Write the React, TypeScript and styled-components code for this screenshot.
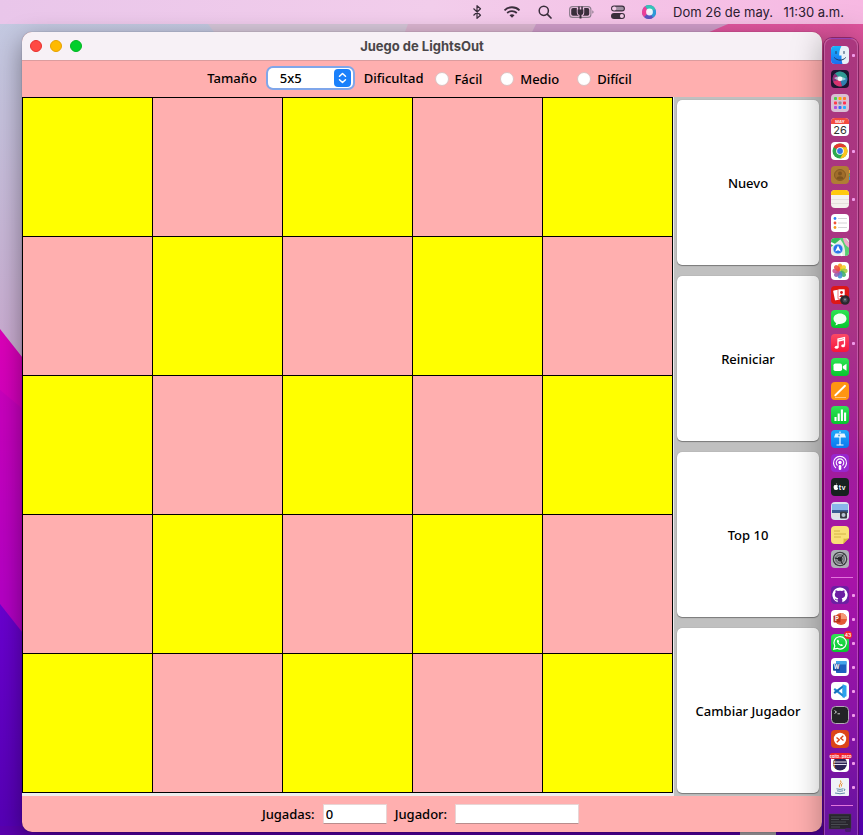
import React, { useState } from "react";
import styled, { createGlobalStyle } from "styled-components";

const GlobalStyle = createGlobalStyle`
  *, *::before, *::after { box-sizing: border-box; }
  html, body { margin: 0; padding: 0; overflow: hidden; }
  button, input, select { font: inherit; color: inherit; }
`;

const uiFont = `"Noto Sans", "Open Sans", sans-serif`;
const systemFont = `Inter, "Liberation Sans", sans-serif`;

const Screen = styled.div`
  position: relative;
  isolation: isolate;
  height: 100vh;
  overflow: hidden;
  display: grid;
  grid-template-rows: 24px minmax(0, 1fr);
  font-family: ${uiFont};
  font-size: 13px;
  font-weight: 500;
  color: #000;
`;

const WallpaperArt = styled.svg`
  position: absolute;
  inset: 0;
  width: 100%;
  height: 100%;
  z-index: -1;
`;

const MenuBar = styled.header`
  display: flex;
  align-items: center;
  justify-content: flex-end;
  gap: 17px;
  padding-right: 19px;
  background: linear-gradient(90deg, #e9c6ea, #f2cdeb 50%, #f7b8e2);
  font-family: ${systemFont};
  font-size: 13px;
  font-weight: 400;
  color: #2b2030;
`;

const MenuIcon = styled.svg`
  display: block;
  flex: none;
`;

const Clock = styled.time`
  display: flex;
  justify-content: space-between;
  min-width: 171px;
  white-space: nowrap;
`;

const Desktop = styled.div`
  display: grid;
  grid-template-columns: minmax(0, 1fr) 34px;
  grid-template-rows: minmax(0, 1fr);
  gap: 2px;
  padding: 0 5px 0 22px;
  min-height: 0;
`;

const Window = styled.main`
  display: flex;
  flex-direction: column;
  min-height: 0;
  margin: 8px 0 3px;
  border-radius: 10px;
  overflow: hidden;
  background: #ffafaf;
  box-shadow: 0 0 1px rgba(0, 0, 0, 0.6), 0 8px 26px rgba(0, 0, 0, 0.4);
`;

const TitleBar = styled.div`
  display: grid;
  grid-template-columns: 1fr auto 1fr;
  align-items: center;
  height: 29px;
  padding: 0 8px;
  background: #f7f1f6;
  border-bottom: 1px solid #dc9c9e;
`;

const Title = styled.h1`
  margin: 0;
  font-family: ${systemFont};
  font-size: 13px;
  font-weight: 700;
  color: #4a4649;
`;

const Lights = styled.div`
  display: flex;
  gap: 8px;
`;

const Light = styled.button<{ $fill: string; $edge: string }>`
  width: 12px;
  height: 12px;
  padding: 0;
  border: 1px solid ${(p) => p.$edge};
  border-radius: 50%;
  background: ${(p) => p.$fill};
`;

const Toolbar = styled.div`
  display: flex;
  align-items: center;
  justify-content: center;
  gap: 11px;
  height: 36px;
  padding: 0 5px 2px 0;
`;

const SelectBox = styled.div`
  position: relative;
  display: flex;
  align-items: center;
`;

const SizeSelect = styled.select`
  appearance: none;
  width: 85px;
  height: 20px;
  padding: 0 24px 0 12px;
  border: 0;
  border-radius: 5px;
  background: #fff;
  box-shadow: 0 0 0 2px #7fa6ea;
  line-height: 20px;
  outline: none;
`;

const Stepper = styled.svg`
  position: absolute;
  right: 2px;
  top: 1px;
  pointer-events: none;
`;

const RadioGroup = styled.div`
  display: flex;
  gap: 18px;
  padding-top: 2px;
`;

const RadioLabel = styled.label`
  display: flex;
  align-items: center;
  gap: 6px;
`;

const Radio = styled.input`
  appearance: none;
  width: 14px;
  height: 14px;
  margin: 0;
  border: 1px solid #dcc2c2;
  border-radius: 50%;
  background: #fff;
  &:checked {
    border: 4px solid #0a7aff;
  }
`;

const Body = styled.div`
  flex: 1;
  min-height: 0;
  display: grid;
  grid-template-columns: minmax(0, 1fr) 148px;
`;

const BoardFrame = styled.div`
  display: grid;
  min-height: 0;
  padding: 0 1px 3px 0;
  background: #ededed;
`;

const Board = styled.div`
  display: grid;
  grid-template-columns: repeat(5, 1fr);
  grid-template-rows: repeat(5, 1fr);
  gap: 1px;
  padding: 1px;
  background: #000;
`;

const Cell = styled.button<{ $on: boolean }>`
  padding: 0;
  border: 0;
  background: ${(p) => (p.$on ? "#ffff00" : "#ffafaf")};
`;

const SidePanel = styled.div`
  display: grid;
  grid-auto-rows: 1fr;
  gap: 11px;
  padding: 3px;
  background: #c0c0c0;
`;

const ActionButton = styled.button`
  padding: 0;
  border: 0;
  border-radius: 5px;
  background: #fff;
  box-shadow: 0 1px 1px rgba(0, 0, 0, 0.35), 0 0 1px rgba(0, 0, 0, 0.3);
`;

const StatusBar = styled.div`
  display: flex;
  align-items: center;
  justify-content: center;
  gap: 8px;
  height: 36px;
  padding-right: 3px;
`;

const Field = styled.input<{ $width: number }>`
  width: ${(p) => p.$width}px;
  height: 20px;
  padding: 0 2px;
  border: 1px solid #e8d5d5;
  border-bottom-color: #b98d8d;
  border-radius: 0;
  background: #fff;
  outline: none;
`;

const Dock = styled.nav`
  margin-top: 14px;
  padding: 4px 0 0 6px;
  height: 820px;
  border: 1px solid rgba(255, 190, 235, 0.3);
  border-radius: 8px;
  background: linear-gradient(#aa377e, #a93485 35%, #a01c9c 52%, #a813a8 66%, #8b14a5 82%, #6612a0 97%);
  box-shadow: 0 0 0 1px rgba(90, 10, 70, 0.55), 0 0 32px rgba(0, 0, 0, 0.35);
`;

const DockRow = styled.div`
  display: flex;
  align-items: center;
  gap: 3px;
  height: 24px;
`;

const DockButton = styled.button`
  display: block;
  width: 18px;
  height: 18px;
  padding: 0;
  border: 0;
  background: none;
`;

const DockIcon = styled.svg`
  display: block;
  overflow: visible;
`;

const RunningDot = styled.span`
  width: 3px;
  height: 3px;
  border-radius: 1px;
  background: #f19bea;
`;

const Divider = styled.hr`
  height: 1px;
  margin: 6px 4px 5px 0;
  border: 0;
  background: #e274dc;
`;

type App = { name: string; running?: boolean; art: React.ReactNode };

const Tile = ({ fill }: { fill: string }) => <rect width="18" height="18" rx="4" fill={fill} />;

const PETALS = ["#f79a1e", "#f6d326", "#9ccb3b", "#3fae6a", "#3f8fd6", "#8a62b5", "#c9518f", "#ef4d3c"];
const LAUNCH = ["#4cd04c", "#ffb000", "#ff7a30", "#ff3b4a", "#8c8c9a", "#ff3050", "#b04ee0", "#2f6fff", "#28b4ff"];

const apps: App[] = [
  {
    name: "Finder",
    running: true,
    art: (
      <>
        <Tile fill="#e9f0f7" />
        <path d="M4 0H10.500C8.800 3 8.300 6 8.200 9.500H10.500C10.400 12.500 10.800 15.500 11.500 18H4a4 4 0 0 1-4-4V4a4 4 0 0 1 4-4Z" fill="url(#finder)" />
        <path d="M5 5.500V7.500M13 5.500V7.500M3.500 11.800C6.500 15 11.500 15 14.500 11.800" fill="none" stroke="#1c3b63" strokeWidth="1" strokeLinecap="round" />
      </>
    ),
  },
  {
    name: "Siri",
    art: (
      <>
        <Tile fill="#1b1530" />
        <circle cx="9" cy="9" r="7.500" fill="#27506e" />
        <path d="M9 9L4 3.500A7.500 7.500 0 0 1 16.300 7.500Z" fill="#2f9a94" />
        <path d="M9 9L16.300 7.500A7.500 7.500 0 0 1 11 16.200Z" fill="#2e7fb0" />
        <path d="M9 9L11 16.200A7.500 7.500 0 0 1 2 11.500Z" fill="#d8336e" />
        <path d="M9 9L2 11.500A7.500 7.500 0 0 1 4 3.500Z" fill="#8c2f78" />
        <path d="M3 8C6 5.500 12 6 15 9C12 11.500 6 11 3 8Z" fill="#bdeff0" opacity=".7" />
        <circle cx="9" cy="8.800" r="2.400" fill="#fff" opacity=".9" />
      </>
    ),
  },
  {
    name: "Launchpad",
    art: (
      <>
        <Tile fill="#d9bfd3" />
        {LAUNCH.map((c, i) => (
          <rect key={c} x={3 + (i % 3) * 4.5} y={3 + Math.floor(i / 3) * 4.5} width="3" height="3" rx=".8" fill={c} />
        ))}
      </>
    ),
  },
  {
    name: "Calendario",
    art: (
      <>
        <Tile fill="#fff" />
        <path d="M0 6V4a4 4 0 0 1 4-4H14a4 4 0 0 1 4 4V6Z" fill="#f34b40" />
        <text x="9" y="4.800" textAnchor="middle" fontFamily="Inter" fontSize="4" fontWeight="700" fill="#fff">MAY</text>
        <text x="9" y="15.500" textAnchor="middle" fontFamily="Inter" fontSize="11" fontWeight="400" fill="#333">26</text>
      </>
    ),
  },
  {
    name: "Chrome",
    running: true,
    art: (
      <>
        <Tile fill="#fff" />
        <circle cx="9" cy="9" r="7.500" fill="#2da94f" />
        <path d="M9 9L2.500 5.250A7.500 7.500 0 0 1 15.500 5.250H9Z" fill="#e33b2e" />
        <path d="M9 5.250H15.500A7.500 7.500 0 0 1 9 16.500L12.250 11Z" fill="#fcc31e" />
        <circle cx="9" cy="9" r="3.800" fill="#fff" />
        <circle cx="9" cy="9" r="2.900" fill="#3478e5" />
      </>
    ),
  },
  {
    name: "Contactos",
    art: (
      <>
        <path d="M17 4h2v3h-2Z" fill="#e8a33c" />
        <path d="M17 7.500h2v3h-2Z" fill="#55b85b" />
        <path d="M17 11h2v3h-2Z" fill="#3f8fd6" />
        <Tile fill="#b07d35" />
        <circle cx="9" cy="9" r="5.500" fill="#a06d2b" stroke="#7d5420" strokeWidth=".8" />
        <circle cx="9" cy="7.500" r="2" fill="#7d5420" />
        <path d="M5.500 12.500C6 9.600 12 9.600 12.500 12.500Q9 15 5.500 12.500Z" fill="#7d5420" />
      </>
    ),
  },
  {
    name: "Notas",
    running: true,
    art: (
      <>
        <Tile fill="#f4f1ee" />
        <path d="M0 5V4a4 4 0 0 1 4-4H14a4 4 0 0 1 4 4V5Z" fill="#ffc90d" />
        <path d="M0 9.500H18M0 13.500H18" stroke="#ddd8d4" strokeWidth=".7" />
      </>
    ),
  },
  {
    name: "Recordatorios",
    art: (
      <>
        <Tile fill="#fff" />
        <circle cx="4" cy="4.500" r="1.400" fill="#2f80f0" />
        <circle cx="4" cy="9" r="1.400" fill="#f05138" />
        <circle cx="4" cy="13.500" r="1.400" fill="#f59a23" />
        <path d="M7 4.500H16M7 9H16M7 13.500H16" stroke="#c9c9cc" strokeWidth=".8" />
      </>
    ),
  },
  {
    name: "Mapas",
    art: (
      <>
        <Tile fill="#e8efe6" />
        <path d="M4 0H11L0 9V4a4 4 0 0 1 4-4Z" fill="#35bd5b" />
        <path d="M8 0H14L18 5V14a4 4 0 0 1-4 4C15 10 12 4 8 0Z" fill="#58cf72" />
        <path d="M12 0C13 8 18 9 18 10V5L14 0Z" fill="#f0a6c8" />
        <path d="M11 18C9 11 6 7 0 5" fill="none" stroke="#fff" strokeWidth="2" />
        <circle cx="7" cy="11" r="5" fill="#2776e8" stroke="#d6e6fb" strokeWidth=".8" />
        <path d="M7 7.500L9.800 13.500L7 12.200L4.200 13.500Z" fill="#fff" />
      </>
    ),
  },
  {
    name: "Fotos",
    art: (
      <>
        <Tile fill="#fff" />
        {PETALS.map((c, i) => (
          <ellipse key={c} cx="9" cy="5" rx="2.400" ry="3.600" fill={c} opacity=".88" transform={`rotate(${i * 45} 9 9)`} />
        ))}
      </>
    ),
  },
  {
    name: "Photo Booth",
    art: (
      <>
        <Tile fill="#de1717" />
        <rect x="3" y="4" width="7" height="10" rx=".8" fill="#fff" transform="rotate(-12 6 9)" />
        <rect x="7" y="3" width="7" height="10" rx=".8" fill="#fff" stroke="#de1717" strokeWidth=".6" />
        <circle cx="10.500" cy="6.500" r="1.400" fill="#de1717" />
        <path d="M8.200 11Q10.500 6.500 12.800 11Z" fill="#de1717" />
        <circle cx="14" cy="14" r="4.800" fill="#29272c" />
        <circle cx="14" cy="14" r="2.500" fill="#474754" />
        <circle cx="14" cy="13.500" r="1" fill="#899" />
      </>
    ),
  },
  {
    name: "Mensajes",
    art: (
      <>
        <Tile fill="url(#green)" />
        <path d="M9 3.500C5.200 3.500 2.500 5.800 2.500 8.800C2.500 10.700 3.700 12.300 5.200 13.200Q5 14.500 4 15.200Q6 15 7.300 13.900C12 14.500 15.500 12.200 15.500 8.800C15.500 5.800 12.800 3.500 9 3.500Z" fill="#f4fff5" />
      </>
    ),
  },
  {
    name: "Música",
    running: true,
    art: (
      <>
        <Tile fill="url(#music)" />
        <path d="M7 13V5L13.500 3.500V11.500M7 7L13.500 5.500" fill="none" stroke="#fff" strokeWidth="1.300" />
        <ellipse cx="5.600" cy="13.200" rx="1.900" ry="1.500" fill="#fff" />
        <ellipse cx="12.100" cy="11.800" rx="1.900" ry="1.500" fill="#fff" />
      </>
    ),
  },
  {
    name: "FaceTime",
    art: (
      <>
        <Tile fill="url(#green)" />
        <rect x="2.500" y="5.500" width="8.500" height="7.500" rx="1.800" fill="#fff" />
        <path d="M11.800 8.200L15.500 5.800V12.700L11.800 10.300Z" fill="#fff" />
      </>
    ),
  },
  {
    name: "Pages",
    art: (
      <>
        <Tile fill="#ff9512" />
        <path d="M4.300 13.300L14 3.800" stroke="#fff" strokeWidth="1.900" strokeLinecap="round" />
        <path d="M4 15.500H15" stroke="#ffd4a0" strokeWidth=".8" />
      </>
    ),
  },
  {
    name: "Numbers",
    art: (
      <>
        <Tile fill="url(#green)" />
        <path d="M4.500 15V11M7.700 15V7.500M10.900 15V3.500M14.100 15V6.500" stroke="#fff" strokeWidth="2.100" />
      </>
    ),
  },
  {
    name: "Keynote",
    art: (
      <>
        <Tile fill="url(#blue)" />
        <path d="M4.500 3.500H13.500L15 7.500H3Z" fill="#e8f5ff" />
        <path d="M9 7V15M5.500 15H12.500M9 3V1.500" stroke="#fff" strokeWidth="1.200" />
        <circle cx="8" cy="5.500" r="1" fill="#52a7e0" />
      </>
    ),
  },
  {
    name: "Podcasts",
    art: (
      <>
        <Tile fill="#9827cf" />
        <path d="M5 14A6.500 6.500 0 1 1 13 14M6.500 11.500A3.800 3.800 0 1 1 11.500 11.500" fill="none" stroke="#fff" strokeWidth="1.100" />
        <circle cx="9" cy="8.500" r="1.700" fill="#fff" />
        <rect x="7.700" y="11" width="2.600" height="5" rx="1.200" fill="#fff" />
      </>
    ),
  },
  {
    name: "Apple TV",
    art: (
      <>
        <Tile fill="#17211f" />
        <path d="M5 7.300C4 6.800 2.700 7.200 2.600 8.900C2.500 10.500 3.600 12.200 4.300 11.900Q5 11.600 5.600 11.900C6.300 12.200 7 11 7.200 10.200C6.200 9.700 6.200 8.300 7 7.700C6.400 6.900 5.600 7 5 7.300ZM5 6.800Q5 5.600 6.100 5.200Q6.200 6.500 5 6.800Z" fill="#fff" />
        <text x="7.800" y="12" fontFamily="Inter" fontSize="7" fontWeight="600" fill="#fff">tv</text>
      </>
    ),
  },
  {
    name: "Vista Previa",
    art: (
      <>
        <Tile fill="#dce4ee" />
        <rect x="1" y="2" width="16" height="6" fill="#8ab7ea" />
        <rect x="1" y="8" width="16" height="3" fill="#3a5f95" />
        <rect x="1" y="11" width="16" height="4" fill="#e0e2e4" />
        <rect x="9" y="9.500" width="7" height="7" rx="1" fill="#3a3d45" />
        <circle cx="12.500" cy="13" r="2" fill="#b7c3d2" />
      </>
    ),
  },
  {
    name: "Notas adhesivas",
    art: (
      <>
        <path d="M4 0H14a4 4 0 0 1 4 4V12L12 18H4a4 4 0 0 1-4-4V4a4 4 0 0 1 4-4Z" fill="#f9e077" />
        <path d="M18 12L12 18Q13 14 12.500 12.500Q15 13 18 12Z" fill="#d9b73e" />
        <path d="M3 5H9M3 8H15M3 11H10" stroke="#cba83a" strokeWidth=".8" />
      </>
    ),
  },
  {
    name: "Preferencias del Sistema",
    art: (
      <>
        <Tile fill="#aeb0b5" />
        <circle cx="9" cy="9" r="7.300" fill="#3c3d42" />
        <circle cx="9" cy="9" r="5.600" fill="#73757b" stroke="#c3c4c8" strokeWidth=".9" />
        <circle cx="9" cy="9" r="3" fill="#35363b" stroke="#c3c4c8" strokeWidth=".6" />
        <path d="M9 9L3.500 8M9 9L12.500 4.500M9 9L11.500 14" stroke="#1f2024" strokeWidth="1" />
      </>
    ),
  },
];

const recentApps: App[] = [
  {
    name: "GitHub Desktop",
    running: true,
    art: (
      <>
        <Tile fill="#6c1fa3" />
        <path d="M9 1.500A7.500 7.500 0 0 0 6.700 16.200V14.200C4.600 14.600 4.200 13.200 3.800 12.700C5 12.500 5.300 13.700 6.700 13.400Q6.800 12.700 7.300 12.200C5 11.900 3.800 10.800 3.800 8.500Q3.800 7.300 4.600 6.400Q4.200 5.300 4.700 4.300Q5.700 4.300 6.900 5.100Q9 4.500 11.100 5.100Q12.300 4.300 13.300 4.300Q13.800 5.300 13.400 6.400Q14.200 7.300 14.200 8.500C14.200 10.800 13 11.900 10.700 12.200Q11.300 12.700 11.300 13.700V16.200A7.500 7.500 0 0 0 9 1.500Z" fill="#fff" />
      </>
    ),
  },
  {
    name: "PowerPoint",
    running: true,
    art: (
      <>
        <Tile fill="#fff" />
        <circle cx="10" cy="9" r="6" fill="#e35a37" />
        <path d="M10 3A6 6 0 0 1 16 9H10Z" fill="#f59a78" />
        <rect x="2.500" y="5.500" width="7" height="7" rx=".8" fill="#b9331b" />
        <text x="6" y="11" textAnchor="middle" fontFamily="Inter" fontSize="6" fontWeight="700" fill="#fff">P</text>
      </>
    ),
  },
  {
    name: "WhatsApp",
    running: true,
    art: (
      <>
        <Tile fill="url(#green)" />
        <path d="M2.800 15.200L3.800 12A6.200 6.200 0 1 1 6.200 14.300Z" fill="none" stroke="#fff" strokeWidth="1.200" />
        <path d="M6.500 5.800C5.200 7.200 6.200 9 7.600 10.400C9 11.800 11 12.600 12.100 11.200L10.600 9.900L9.700 10.600Q8.200 9.900 7.500 8.400L8.100 7.500L7.300 5.800Z" fill="#fff" />
        <circle cx="17" cy="1" r="4" fill="#f3222c" />
        <text x="17" y="2.800" textAnchor="middle" fontFamily="Inter" fontSize="5" fontWeight="600" fill="#fff">43</text>
      </>
    ),
  },
  {
    name: "Word",
    running: true,
    art: (
      <>
        <Tile fill="#fff" />
        <rect x="5" y="3" width="10.500" height="12" rx=".8" fill="#1d5fbf" />
        <path d="M5 3.800Q5 3 5.800 3H14.700Q15.500 3 15.500 3.800V6.500H5Z" fill="#43a4ea" />
        <rect x="2" y="5.700" width="7" height="7" rx=".8" fill="#174a9c" />
        <text x="5.500" y="11.200" textAnchor="middle" fontFamily="Inter" fontSize="5.500" fontWeight="700" fill="#fff">W</text>
      </>
    ),
  },
  {
    name: "Visual Studio Code",
    running: true,
    art: (
      <>
        <Tile fill="#fff" />
        <path d="M12.500 4V14L3.200 6.800" fill="none" stroke="#2187d2" strokeWidth="2.100" />
        <path d="M3.200 11.200L12.500 4" stroke="#1570bd" strokeWidth="2.100" />
        <path d="M11.700 2.200L15.500 3.800V14.200L11.700 15.800Z" fill="#2ba2ee" />
      </>
    ),
  },
  {
    name: "Terminal",
    running: true,
    art: (
      <>
        <rect x=".5" y=".5" width="17" height="17" rx="4" fill="#232326" stroke="#b5aab8" strokeWidth="1" />
        <path d="M3.500 4.500L5.500 6L3.500 7.500M6.500 7.800H9" fill="none" stroke="#fff" strokeWidth=".8" />
      </>
    ),
  },
  {
    name: "Remote Desktop",
    running: true,
    art: (
      <>
        <Tile fill="#dc4518" />
        <circle cx="9" cy="9" r="6.200" fill="#fff" />
        <path d="M5.500 7.500L8.300 9.800L5.800 12.300M12.300 5.700L9.700 8.200L12.500 10.500" fill="none" stroke="#dc4518" strokeWidth="1.400" />
      </>
    ),
  },
  {
    name: "Eclipse",
    running: true,
    art: (
      <>
        <Tile fill="#fff" />
        <circle cx="9" cy="9.500" r="7" fill="#2c2255" />
        <path d="M3 7A7 7 0 0 0 5 15A9 9 0 0 1 4.500 6Z" fill="#f7941e" />
        <path d="M2.500 8H15.500M2.500 10.500H15.500" stroke="#e4e0f0" strokeWidth="1.100" />
        <rect x="-1.500" y="-1" width="22" height="6" rx="3" fill="#f3222c" />
        <text x="9.500" y="3.500" textAnchor="middle" fontFamily="Inter" fontSize="4" fontWeight="600" fill="#fff">edito..paco</text>
      </>
    ),
  },
  {
    name: "Java",
    running: true,
    art: (
      <>
        <rect width="18" height="18" rx="1" fill="#f0f3f7" />
        <path d="M9.500 2.500Q11 4.500 8.800 6.500Q7.500 8 9 9.500M11.500 5.500Q9.500 6.800 10.500 8.500" fill="none" stroke="#e58a2d" strokeWidth="1" />
        <path d="M5.500 10.800Q9 12 12.500 10.800M6 12.800Q9 13.800 12 12.800M4 15Q9 16.500 14 15M13 11Q15 11 13 13" fill="none" stroke="#5382a1" strokeWidth=".9" />
      </>
    ),
  },
];

const windowThumb: App = {
  name: "Ventana minimizada",
  art: (
    <>
      <rect x="-2" y="0" width="22" height="15" fill="#29262e" stroke="#4a4350" strokeWidth=".5" />
      <path d="M0 3H18M0 5.500H8M10 5.500H18M0 8H15M0 10.500H17M0 13H9" stroke="#5e6468" strokeWidth=".6" />
      <rect x="14" y="14" width="6" height="4" rx="1.500" fill="#4a1a70" />
    </>
  ),
};

const DockItem = ({ app }: { app: App }) => (
  <DockRow>
    <DockButton aria-label={app.name}>
      <DockIcon width="18" height="18" viewBox="0 0 18 18">{app.art}</DockIcon>
    </DockButton>
    {app.running && <RunningDot />}
  </DockRow>
);

const Wallpaper = () => (
  <WallpaperArt viewBox="0 0 863 835" preserveAspectRatio="none" aria-hidden="true">
    <defs>
      <linearGradient id="sky" x1="0" y1="0" x2="0" y2="1">
        <stop offset="0" stopColor="#c3cbe2" />
        <stop offset=".42" stopColor="#c9abd0" />
      </linearGradient>
      <linearGradient id="magenta" x1="0" y1="0" x2="0" y2="1">
        <stop offset="0" stopColor="#dc00b8" />
        <stop offset="1" stopColor="#9900d0" />
      </linearGradient>
      <linearGradient id="violet" x1="0" y1="0" x2="0" y2="1">
        <stop offset="0" stopColor="#6a00d0" />
        <stop offset="1" stopColor="#5500b4" />
      </linearGradient>
      <linearGradient id="rose" x1="0" y1="0" x2="0" y2="1">
        <stop offset="0" stopColor="#e0559e" />
        <stop offset=".5" stopColor="#cf3a98" />
        <stop offset=".56" stopColor="#c800b0" />
        <stop offset=".8" stopColor="#9a00d0" />
        <stop offset="1" stopColor="#5c00c4" />
      </linearGradient>
      <linearGradient id="finder" x1="0" y1="0" x2="0" y2="1">
        <stop offset="0" stopColor="#19b6fb" />
        <stop offset="1" stopColor="#1a6df0" />
      </linearGradient>
      <linearGradient id="green" x1="0" y1="0" x2="0" y2="1">
        <stop offset="0" stopColor="#30e455" />
        <stop offset="1" stopColor="#06c62e" />
      </linearGradient>
      <linearGradient id="music" x1="0" y1="0" x2="0" y2="1">
        <stop offset="0" stopColor="#fb4a66" />
        <stop offset="1" stopColor="#f8143a" />
      </linearGradient>
      <linearGradient id="blue" x1="0" y1="0" x2="0" y2="1">
        <stop offset="0" stopColor="#22a8f8" />
        <stop offset="1" stopColor="#0a78f0" />
      </linearGradient>
    </defs>
    <rect width="863" height="835" fill="url(#sky)" />
    <path d="M208 24H536L532 32H214Z" fill="#d5c6d8" />
    <path d="M408 24H536L532 32H405Z" fill="#dbb5d0" />
    <path d="M536 24H728L716 32H532Z" fill="#ce9cc8" />
    <path d="M728 24H863V835H700V36Z" fill="url(#rose)" />
    <path d="M0 329L60 405V835H0Z" fill="url(#magenta)" />
    <path d="M0 390L60 440V835H0Z" fill="#a800c0" opacity=".25" />
    <path d="M0 604L60 680V835H0Z" fill="url(#violet)" />
    <rect x="0" y="826" width="824" height="9" fill="#5a00ae" />
    <rect x="740" y="831" width="36" height="4" fill="#b5afb5" />
  </WallpaperArt>
);

const menuInk = "#3a2e3c";

const StatusIcons = () => (
  <>
    <MenuIcon width="18" height="16" viewBox="0 0 18 16">
      <path d="M5.500 4.500L12.500 11.200L9 14.300V1.700L12.500 4.800L5.500 11.500" fill="none" stroke={menuInk} strokeWidth="1.200" strokeLinejoin="round" />
    </MenuIcon>
    <MenuIcon width="18" height="16" viewBox="0 0 18 16">
      <path d="M1.500 6.300A10.800 10.800 0 0 1 16.500 6.300M4.200 9A7 7 0 0 1 13.800 9" fill="none" stroke={menuInk} strokeWidth="1.800" />
      <path d="M6.500 11.300Q9 9.200 11.500 11.300L9 13.800Z" fill={menuInk} />
    </MenuIcon>
    <MenuIcon width="14" height="16" viewBox="0 0 14 16">
      <circle cx="5.800" cy="6.800" r="4.600" fill="none" stroke={menuInk} strokeWidth="1.500" />
      <path d="M9.200 10.200L13 14" stroke={menuInk} strokeWidth="1.700" strokeLinecap="round" />
    </MenuIcon>
    <MenuIcon width="25" height="16" viewBox="0 0 25 16">
      <rect x=".6" y="2.600" width="21.300" height="10.800" rx="3" fill="none" stroke="#8c7d8d" strokeWidth="1.100" />
      <path d="M23.300 6.300V9.700Q24.600 9.200 24.600 8Q24.600 6.800 23.300 6.300Z" fill="#8c7d8d" />
      <path d="M4 4H7.800V9Q8 11 10 11.800H4Q2.200 11.800 2.200 10V5.800Q2.200 4 4 4ZM15.200 4H18.500Q20.300 4 20.300 5.800V10Q20.300 11.800 18.500 11.800H13.500Q15.200 11 15.200 9Z" fill={menuInk} />
      <path d="M8.600 5.500H14.400V8.800Q14.400 10.500 12.500 11V14.500H10.500V11Q8.600 10.500 8.600 8.800ZM9.200 2.500H10.700V6H9.200ZM12.300 2.500H13.800V6H12.300Z" fill={menuInk} />
    </MenuIcon>
    <MenuIcon width="14" height="16" viewBox="0 0 14 16">
      <rect x=".6" y="2.100" width="12.800" height="4.800" rx="2.400" fill="#9f8fa0" stroke={menuInk} strokeWidth="1.100" />
      <circle cx="3.200" cy="4.500" r="2" fill="#f3cbe7" />
      <rect x="0" y="9" width="14" height="6" rx="3" fill={menuInk} />
      <circle cx="10.900" cy="12" r="2" fill="#f3cbe7" />
    </MenuIcon>
    <MenuIcon width="14" height="16" viewBox="0 0 14 16">
      <circle cx="7" cy="8" r="7" fill="#7a6fc0" />
      <path d="M3 2.300A7 7 0 0 1 13.500 5.500L7 8Z" fill="#35c3b8" />
      <path d="M13.500 5.500A7 7 0 0 1 11 13.700L7 8Z" fill="#2d9ad8" />
      <path d="M11 13.700A7 7 0 0 1 2 13L7 8Z" fill="#5b52c0" />
      <path d="M3 2.300A7 7 0 0 0 2 13L7 8Z" fill="#ec3f98" />
      <circle cx="7.500" cy="8" r="3.400" fill="#fff" opacity=".9" />
    </MenuIcon>
  </>
);

const SIZE = 5;
const levels = ["Fácil", "Medio", "Difícil"];
const actions = ["Nuevo", "Reiniciar", "Top 10", "Cambiar Jugador"];
const startCells = Array.from({ length: SIZE * SIZE }, (_, i) => i % 2 === 0);

export default function App() {
  const [cells, setCells] = useState(startCells);
  const [moves, setMoves] = useState(0);

  const press = (index: number) => {
    const row = Math.floor(index / SIZE);
    const col = index % SIZE;
    setCells((prev) =>
      prev.map((on, i) => {
        const distance = Math.abs(Math.floor(i / SIZE) - row) + Math.abs((i % SIZE) - col);
        return distance <= 1 ? !on : on;
      }),
    );
    setMoves((m) => m + 1);
  };

  return (
    <Screen>
      <GlobalStyle />
      <Wallpaper />
      <MenuBar>
        <StatusIcons />
        <Clock>
          <span>Dom 26 de may.</span>
          <span>11:30 a.m.</span>
        </Clock>
      </MenuBar>
      <Desktop>
        <Window>
          <TitleBar>
            <Lights>
              <Light aria-label="Cerrar" $fill="#ff4a44" $edge="#e8302c" />
              <Light aria-label="Minimizar" $fill="#ffba00" $edge="#e5a100" />
              <Light aria-label="Ampliar" $fill="#00cf2c" $edge="#00b522" />
            </Lights>
            <Title>Juego de LightsOut</Title>
          </TitleBar>
          <Toolbar>
            <label htmlFor="size">Tamaño</label>
            <SelectBox>
              <SizeSelect id="size" defaultValue="5x5">
                <option>5x5</option>
              </SizeSelect>
              <Stepper width="17" height="18" viewBox="0 0 17 18" aria-hidden="true">
                <rect width="17" height="18" rx="4" fill="#1a80fb" />
                <path d="M5.500 7.300L8.500 4.500L11.500 7.300M5.500 10.700L8.500 13.500L11.500 10.700" fill="none" stroke="#fff" strokeWidth="1.500" strokeLinecap="round" strokeLinejoin="round" />
              </Stepper>
            </SelectBox>
            <span id="difficulty">Dificultad</span>
            <RadioGroup role="radiogroup" aria-labelledby="difficulty">
              {levels.map((level) => (
                <RadioLabel key={level}>
                  <Radio type="radio" name="level" value={level} />
                  {level}
                </RadioLabel>
              ))}
            </RadioGroup>
          </Toolbar>
          <Body>
            <BoardFrame>
              <Board>
                {cells.map((on, i) => (
                  <Cell key={i} $on={on} aria-label={`Casilla ${i + 1}`} onClick={() => press(i)} />
                ))}
              </Board>
            </BoardFrame>
            <SidePanel>
              {actions.map((action) => (
                <ActionButton key={action}>{action}</ActionButton>
              ))}
            </SidePanel>
          </Body>
          <StatusBar>
            <label htmlFor="moves">Jugadas:</label>
            <Field id="moves" $width={64} value={moves} readOnly />
            <label htmlFor="player">Jugador:</label>
            <Field id="player" $width={124} />
          </StatusBar>
        </Window>
        <Dock aria-label="Dock">
          {apps.map((app) => (
            <DockItem key={app.name} app={app} />
          ))}
          <Divider />
          {recentApps.map((app) => (
            <DockItem key={app.name} app={app} />
          ))}
          <Divider />
          <DockItem app={windowThumb} />
        </Dock>
      </Desktop>
    </Screen>
  );
}
